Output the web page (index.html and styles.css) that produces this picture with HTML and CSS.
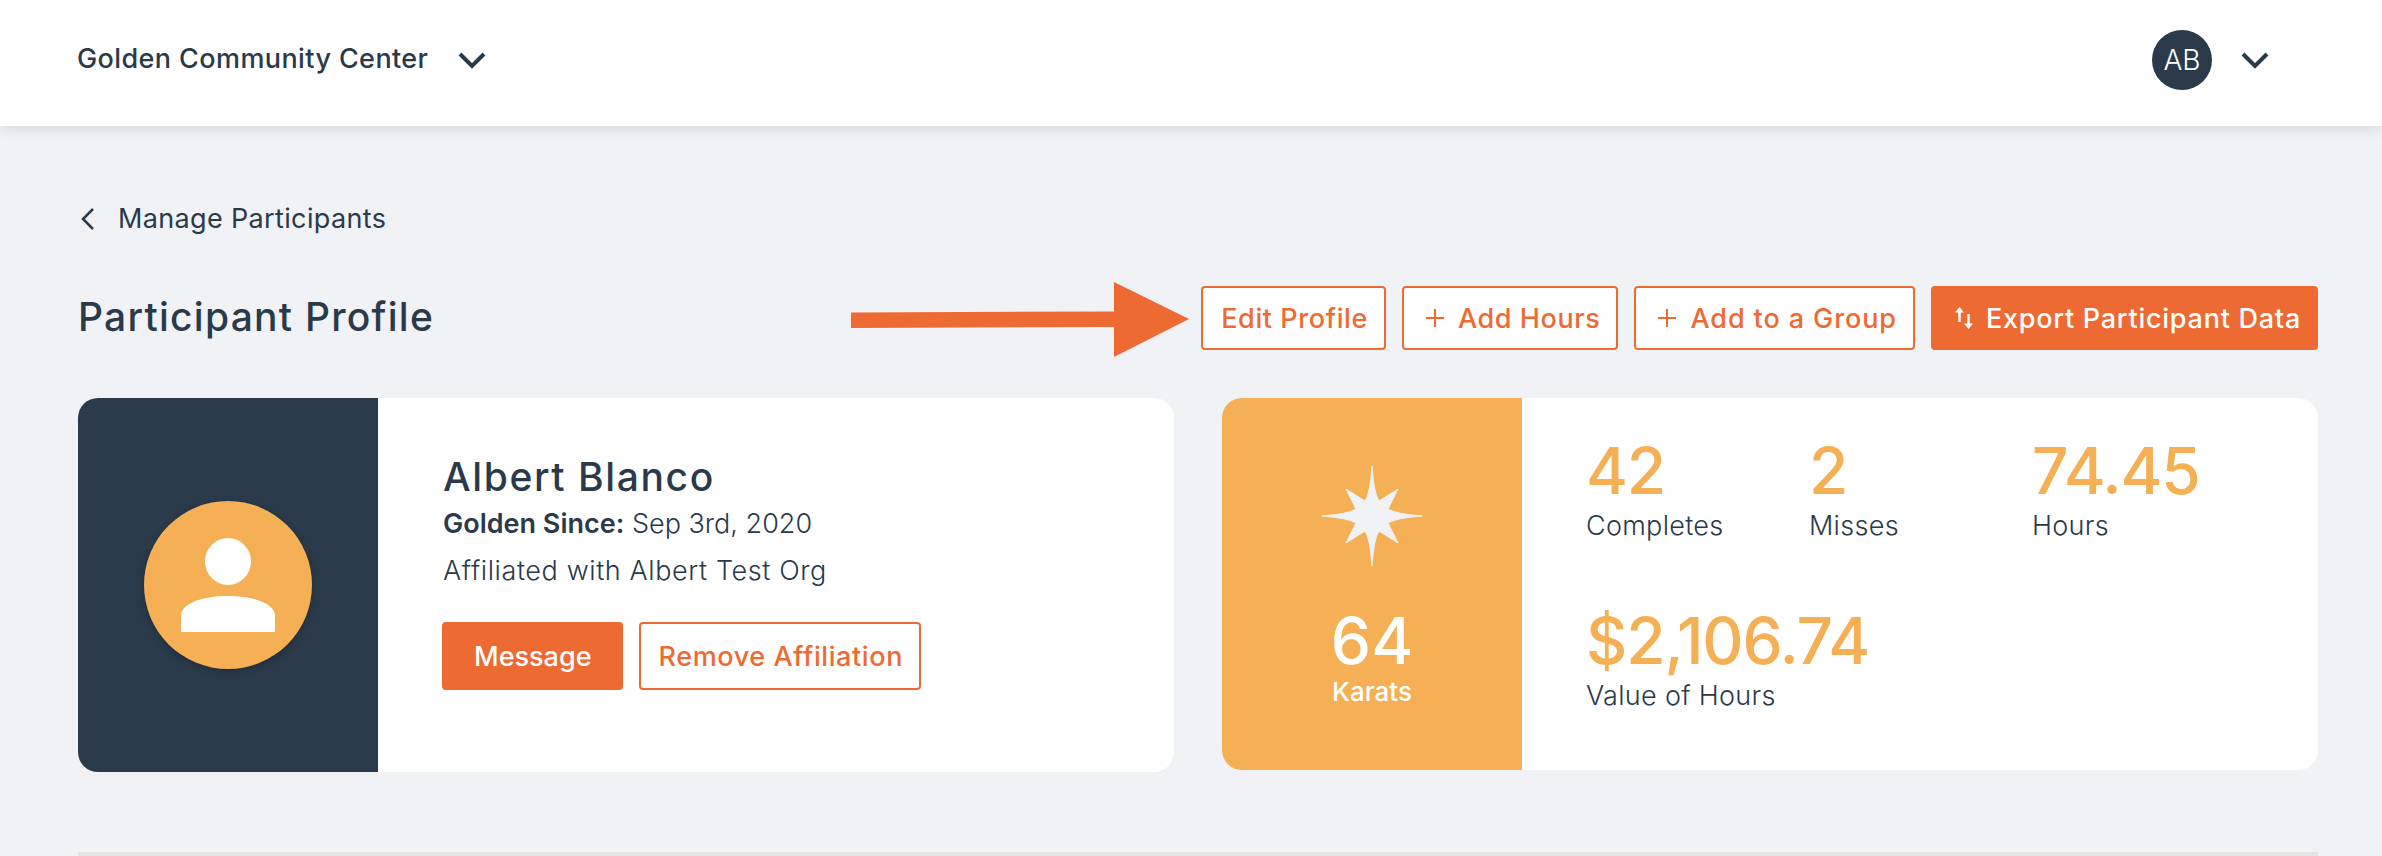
FILE: index.html
```html
<!DOCTYPE html>
<html lang="en">
<head>
    <meta charset="UTF-8">
    <title>Participant Profile</title>
    <link rel="stylesheet" href="styles.css">
</head>
<body>
<header class="topbar">
    <div class="org-switch">
        <span class="org-name">Golden Community Center</span>
        <svg class="chevron" viewBox="0 0 28 18"><path d="M2 3l12 12L26 3"/></svg>
    </div>
    <div class="user-menu">
        <span class="avatar-small">AB</span>
        <svg class="chevron" viewBox="0 0 28 18"><path d="M2 3l12 12L26 3"/></svg>
    </div>
</header>

<main class="page">
    <a class="back-link" href="#">
        <svg class="back-icon" viewBox="0 0 14 24"><path d="M12 2L2 12l10 10"/></svg>
        <span>Manage Participants</span>
    </a>

    <div class="title-row">
        <h1>Participant Profile</h1>
        <svg class="callout-arrow" viewBox="0 0 338 75"><path d="M0 30.5L263 29.5V0L338 37 263 75V45L0 46z"/></svg>
        <div class="actions">
            <button class="btn btn-outline">Edit Profile</button>
            <button class="btn btn-outline"><span class="plus"></span>Add Hours</button>
            <button class="btn btn-outline btn-group"><span class="plus"></span>Add to a Group</button>
            <button class="btn btn-solid btn-export">
                <svg class="export-icon" viewBox="0 0 18 22"><path d="M4.5 4v11M13.5 7v11"/><path class="arrow-head" d="M0 5.5L4.5 0 9 5.5zM9 16.5L13.5 22 18 16.5z"/></svg>
                Export Participant Data
            </button>
        </div>
    </div>

    <div class="cards">
        <section class="card profile-card">
            <div class="card-side side-dark">
                <div class="avatar-large">
                    <svg viewBox="0 0 94 94" class="person"><ellipse cx="47" cy="23.5" rx="23" ry="23.5"/><path d="M0 94V78C0 66 20 58 47 58s47 8 47 20v16z"/></svg>
                </div>
            </div>
            <div class="profile-info">
                <h2>Albert Blanco</h2>
                <p class="since"><strong>Golden Since:</strong> Sep 3rd, 2020</p>
                <p class="affil">Affiliated with Albert Test Org</p>
                <div class="profile-actions">
                    <button class="btn btn-solid btn-tall btn-message">Message</button>
                    <button class="btn btn-outline btn-tall">Remove Affiliation</button>
                </div>
            </div>
        </section>

        <section class="card stats-card">
            <div class="card-side side-gold">
                <svg class="star" viewBox="0 0 100 100"><path d="M50 0Q52 28 57 35L76 23 66 43Q74 48 100 50 74 52 66 57L76 77 57 65Q52 72 50 100 48 72 43 65L24 77 34 57Q26 52 0 50 26 48 34 43L24 23 43 35Q48 28 50 0z"/></svg>
                <div class="karat-num">64</div>
                <div class="karat-label">Karats</div>
            </div>
            <div class="stats">
                <div class="stat"><div class="stat-num">42</div><div class="stat-label">Completes</div></div>
                <div class="stat"><div class="stat-num">2</div><div class="stat-label">Misses</div></div>
                <div class="stat"><div class="stat-num">74.45</div><div class="stat-label">Hours</div></div>
                <div class="stat"><div class="stat-num">$2,106.74</div><div class="stat-label">Value of Hours</div></div>
            </div>
        </section>
    </div>

    <div class="divider"></div>
</main>
</body>
</html>
```

FILE: styles.css
```css
* {
    margin: 0;
    padding: 0;
    box-sizing: border-box;
    font-family: Inter, 'Liberation Sans', sans-serif;
}

body {
    height: 100vh;
    overflow: hidden;
    background: #f0f2f6;
    color: #2a3a4a;
}

.topbar {
    height: 126px;
    background: #fff;
    box-shadow: 0 2px 14px rgba(0, 0, 0, 0.12);
    padding: 0 113px 6px 77px;
    display: flex;
    justify-content: space-between;
    align-items: center;
}

.org-switch,
.user-menu {
    display: flex;
    align-items: center;
}

.org-name {
    font-size: 27px;
    font-weight: 500;
    letter-spacing: 0.4px;
    margin: -4px 30px 0 0;
}

.chevron {
    width: 28px;
    height: 18px;
    fill: none;
    stroke: #2a3a4a;
    stroke-width: 4;
}

.avatar-small {
    width: 60px;
    height: 60px;
    border-radius: 50%;
    background: #2a3a4a;
    color: #fff;
    font-size: 28px;
    font-weight: 300;
    display: flex;
    align-items: center;
    justify-content: center;
    margin-right: 29px;
}

.page {
    padding: 72px 64px 0 78px;
}

.back-link {
    display: flex;
    align-items: center;
    height: 40px;
    color: #2a3a4a;
    text-decoration: none;
    font-size: 27px;
    letter-spacing: 0.35px;
}

.back-icon {
    width: 14px;
    height: 24px;
    margin: 2px 23px 0 3px;
    fill: none;
    stroke: #2a3a4a;
    stroke-width: 2.5;
}

.title-row {
    position: relative;
    display: flex;
    justify-content: space-between;
    align-items: center;
    height: 64px;
    margin-top: 48px;
}

h1 {
    font-size: 39px;
    font-weight: 500;
    letter-spacing: 1.25px;
    margin-top: -4px;
}

.callout-arrow {
    position: absolute;
    left: 773px;
    top: -4px;
    width: 338px;
    height: 75px;
    fill: #ee6a33;
}

.actions {
    display: flex;
    gap: 16px;
}

.btn {
    height: 64px;
    padding: 0 16px 0 18px;
    border-radius: 4px;
    font-size: 27px;
    font-weight: 500;
    letter-spacing: 0.6px;
    display: inline-flex;
    align-items: center;
    cursor: pointer;
    white-space: nowrap;
}

.btn-outline {
    background: #fff;
    border: 2px solid #ee6a33;
    color: #ee6a33;
}

.btn-solid {
    background: #ee6a33;
    border: 2px solid #ee6a33;
    color: #fff;
}

.btn-group {
    letter-spacing: 0.9px;
}

.btn-export {
    padding-right: 15px;
    letter-spacing: 0.75px;
}

.btn-tall {
    height: 68px;
}

.btn-message {
    padding: 0 29px 0 30px;
    letter-spacing: 0;
}

.plus {
    width: 18px;
    height: 18px;
    margin: 0 14px 0 4px;
    background:
        linear-gradient(#ee6a33, #ee6a33) center / 100% 2px no-repeat,
        linear-gradient(#ee6a33, #ee6a33) center / 2px 100% no-repeat;
}

.export-icon {
    width: 18px;
    height: 22px;
    margin: 0 13px 0 4px;
    fill: none;
    stroke: #fff;
    stroke-width: 2.5;
}

.export-icon .arrow-head {
    fill: #fff;
    stroke: none;
}

.cards {
    display: flex;
    gap: 48px;
    margin-top: 48px;
    align-items: flex-start;
}

.card {
    flex: 1;
    display: flex;
    background: #fff;
    border-radius: 20px;
    overflow: hidden;
}

.profile-card {
    height: 374px;
}

.stats-card {
    height: 372px;
}

.card-side {
    width: 300px;
    flex-shrink: 0;
}

.side-dark {
    background: #2a3a4a;
    display: flex;
    align-items: center;
    justify-content: center;
}

.avatar-large {
    width: 168px;
    height: 168px;
    border-radius: 50%;
    background: #f5b056;
    box-shadow: 0 2px 6px rgba(0, 0, 0, 0.25);
    display: flex;
    justify-content: center;
    padding-top: 37px;
}

.person {
    width: 94px;
    height: 94px;
    fill: #fff;
}

.profile-info {
    padding: 56px 0 0 64px;
}

.profile-info h2,
.since,
.affil {
    margin-left: 1px;
}

h2 {
    font-size: 39px;
    font-weight: 500;
    line-height: 46px;
    letter-spacing: 1.6px;
}

.since,
.affil {
    font-size: 27px;
    font-weight: 300;
    line-height: 46px;
    padding-top: 1px;
}

.affil {
    letter-spacing: 0.6px;
}

.since strong {
    font-weight: 600;
}

.profile-actions {
    display: flex;
    gap: 16px;
    margin-top: 28px;
}

.side-gold {
    background: #f5b056;
    color: #fff;
    display: flex;
    flex-direction: column;
    align-items: center;
    padding-top: 68px;
}

.star {
    width: 100px;
    height: 100px;
    fill: #f0f2f6;
    stroke: #f0f2f6;
    stroke-width: 1;
    overflow: visible;
    margin-bottom: 47px;
}

.karat-num {
    font-size: 64px;
    font-weight: 500;
    line-height: 56px;
}

.karat-label {
    font-size: 26px;
    font-weight: 500;
    line-height: 32px;
    margin-top: 7px;
}

.stats {
    display: grid;
    grid-template-columns: repeat(3, 223px);
    grid-auto-rows: 101px;
    row-gap: 69px;
    padding: 45px 0 0 64px;
}

.stat-num {
    font-size: 64px;
    font-weight: 500;
    line-height: 56px;
    letter-spacing: -1.2px;
    color: #f5b056;
    white-space: nowrap;
}

.stat-label {
    font-size: 27px;
    font-weight: 300;
    line-height: 36px;
    letter-spacing: 0.3px;
    margin-top: 9px;
    white-space: nowrap;
}

.divider {
    height: 4px;
    background: #e4e4e4;
    margin-top: 80px;
}
```
